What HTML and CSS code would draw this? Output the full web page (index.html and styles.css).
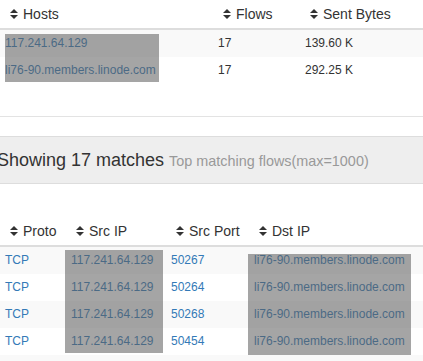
FILE: index.html
```html
<!DOCTYPE html>
<html>
<head>
<meta charset="utf-8">
<link rel="stylesheet" href="styles.css">
</head>
<body>
<div class="wrap">
  <table class="grid top">
    <colgroup><col class="c-host"><col class="c-flows"><col></colgroup>
    <thead>
      <tr>
        <th><svg class="sort" viewBox="0 0 8 12"><path d="M0 5 L4 1 L8 5 Z M0 7 L8 7 L4 11 Z"/></svg>Hosts</th>
        <th><svg class="sort" viewBox="0 0 8 12"><path d="M0 5 L4 1 L8 5 Z M0 7 L8 7 L4 11 Z"/></svg>Flows</th>
        <th><svg class="sort" viewBox="0 0 8 12"><path d="M0 5 L4 1 L8 5 Z M0 7 L8 7 L4 11 Z"/></svg>Sent Bytes</th>
      </tr>
    </thead>
    <tbody>
      <tr><td class="link">117.241.64.129</td><td>17</td><td>139.60 K</td></tr>
      <tr><td class="link">li76-90.members.linode.com</td><td>17</td><td>292.25 K</td></tr>
    </tbody>
  </table>
  <div class="redact r-hosts"></div>
</div>

<div class="rule"></div>

<div class="panel">
  <span class="title">Showing 17 matches</span> <small class="sub">Top matching flows(max=1000)</small>
</div>

<div class="wrap">
  <table class="grid bottom">
    <colgroup><col class="c-proto"><col class="c-src"><col class="c-port"><col></colgroup>
    <thead>
      <tr>
        <th><svg class="sort" viewBox="0 0 8 12"><path d="M0 5 L4 1 L8 5 Z M0 7 L8 7 L4 11 Z"/></svg>Proto</th>
        <th><svg class="sort" viewBox="0 0 8 12"><path d="M0 5 L4 1 L8 5 Z M0 7 L8 7 L4 11 Z"/></svg>Src IP</th>
        <th><svg class="sort" viewBox="0 0 8 12"><path d="M0 5 L4 1 L8 5 Z M0 7 L8 7 L4 11 Z"/></svg>Src Port</th>
        <th><svg class="sort" viewBox="0 0 8 12"><path d="M0 5 L4 1 L8 5 Z M0 7 L8 7 L4 11 Z"/></svg>Dst IP</th>
      </tr>
    </thead>
    <tbody>
      <tr><td class="link">TCP</td><td class="link">117.241.64.129</td><td class="link">50267</td><td class="link">li76-90.members.linode.com</td></tr>
      <tr><td class="link">TCP</td><td class="link">117.241.64.129</td><td class="link">50264</td><td class="link">li76-90.members.linode.com</td></tr>
      <tr><td class="link">TCP</td><td class="link">117.241.64.129</td><td class="link">50268</td><td class="link">li76-90.members.linode.com</td></tr>
      <tr><td class="link">TCP</td><td class="link">117.241.64.129</td><td class="link">50454</td><td class="link">li76-90.members.linode.com</td></tr>
      <tr><td>&nbsp;</td><td></td><td></td><td></td></tr>
    </tbody>
  </table>
  <div class="redact r-src"></div>
  <div class="redact r-dst"></div>
</div>
</body>
</html>
```
FILE: styles.css
```css
html, body {
  margin: 0;
  padding: 0;
  background: #fff;
  overflow: hidden;
}
body {
  font-family: "Liberation Sans", Arial, sans-serif;
  color: #333;
  width: 423px;
  height: 361px;
}
.wrap {
  position: relative;
}
.grid {
  width: 100%;
  border-collapse: collapse;
  table-layout: fixed;
}
.c-host { width: 213px; }
.c-flows { width: 87px; }
.c-proto { width: 66px; }
.c-src { width: 100px; }
.c-port { width: 83px; }

.grid th {
  text-align: left;
  font-weight: normal;
  font-size: 14px;
  line-height: 20px;
  padding: 4px 4px 4px 10px;
  border-bottom: 2px solid #ddd;
  white-space: nowrap;
}
.grid td {
  font-size: 12px;
  line-height: 19px;
  padding: 4px 5px;
  white-space: nowrap;
  overflow: hidden;
}
.grid tbody tr:nth-child(odd) td {
  background: #f9f9f9;
}
.link {
  color: #337ab7;
}
.sort {
  width: 8px;
  height: 12px;
  fill: #333;
  margin-right: 5px;
  vertical-align: -1px;
}
.redact {
  position: absolute;
  background: rgba(94, 94, 94, 0.56);
}
.r-hosts { left: 5px; top: 34px; width: 154px; height: 48px; }
.r-src { left: 65px; top: 33px; width: 98px; height: 103px; }
.r-dst { left: 248px; top: 37px; width: 163px; height: 101px; }

.rule {
  height: 1px;
  background: #e3e3e3;
  margin-top: 32px;
}
.panel {
  margin-top: 19px;
  border-top: 1px solid #ddd;
  border-bottom: 1px solid #ddd;
  background: #eee;
  height: 46px;
  display: flex;
  align-items: center;
  white-space: nowrap;
  margin-bottom: 33px;
}
.title {
  font-size: 18px;
  margin-left: -3px;
  color: #333;
}
.sub {
  font-size: 14.4px;
  color: #999;
  margin-left: 5px;
  position: relative;
  top: 1px;
}
```
